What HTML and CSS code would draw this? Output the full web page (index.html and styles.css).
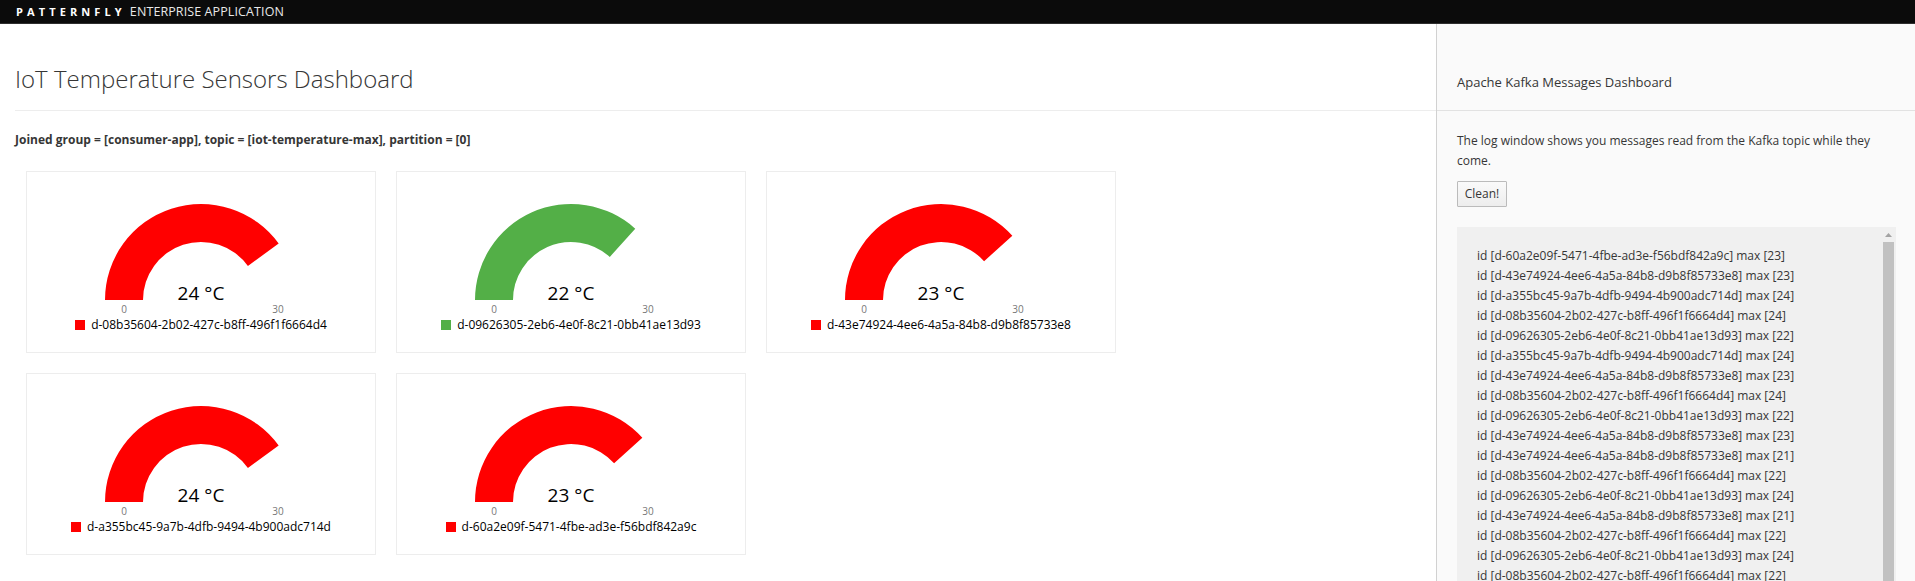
FILE: index.html
```html
<!DOCTYPE html>
<html lang="en">
<head>
<meta charset="utf-8">
<title>IoT Temperature Sensors Dashboard</title>
<link rel="stylesheet" href="styles.css">
</head>
<body>
<nav class="navbar"><span class="brand-logo">PATTERNFLY</span> <span class="brand-name">ENTERPRISE APPLICATION</span></nav>
<div class="layout">
  <main class="main">
    <div class="page-header"><h1>IoT Temperature Sensors Dashboard</h1></div>
    <p class="status">Joined group = [consumer-app], topic = [iot-temperature-max], partition = [0]</p>
    <div class="gauges">
      <div class="card">
        <svg class="gauge" width="348" height="146" viewBox="0 0 348 146">
          <path class="arc-red" d="M78,128 A96,96 0 0 1 251.67,71.57 L220.92,93.91 A58,58 0 0 0 116,128 Z"/>
          <text class="g-value" x="174" y="127.5">24 °C</text>
          <text class="g-minmax" x="97" y="141">0</text>
          <text class="g-minmax" x="251" y="141">30</text>
        </svg>
        <div class="legend"><span class="swatch red"></span><span class="legend-text">d-08b35604-2b02-427c-b8ff-496f1f6664d4</span></div>
      </div>
      <div class="card">
        <svg class="gauge" width="348" height="146" viewBox="0 0 348 146">
          <path class="arc-green" d="M78,128 A96,96 0 0 1 238.24,56.66 L212.81,84.90 A58,58 0 0 0 116,128 Z"/>
          <text class="g-value" x="174" y="127.5">22 °C</text>
          <text class="g-minmax" x="97" y="141">0</text>
          <text class="g-minmax" x="251" y="141">30</text>
        </svg>
        <div class="legend"><span class="swatch green"></span><span class="legend-text">d-09626305-2eb6-4e0f-8c21-0bb41ae13d93</span></div>
      </div>
      <div class="card">
        <svg class="gauge" width="348" height="146" viewBox="0 0 348 146">
          <path class="arc-red" d="M78,128 A96,96 0 0 1 245.34,63.76 L217.10,89.19 A58,58 0 0 0 116,128 Z"/>
          <text class="g-value" x="174" y="127.5">23 °C</text>
          <text class="g-minmax" x="97" y="141">0</text>
          <text class="g-minmax" x="251" y="141">30</text>
        </svg>
        <div class="legend"><span class="swatch red"></span><span class="legend-text">d-43e74924-4ee6-4a5a-84b8-d9b8f85733e8</span></div>
      </div>
      <div class="card">
        <svg class="gauge" width="348" height="146" viewBox="0 0 348 146">
          <path class="arc-red" d="M78,128 A96,96 0 0 1 251.67,71.57 L220.92,93.91 A58,58 0 0 0 116,128 Z"/>
          <text class="g-value" x="174" y="127.5">24 °C</text>
          <text class="g-minmax" x="97" y="141">0</text>
          <text class="g-minmax" x="251" y="141">30</text>
        </svg>
        <div class="legend"><span class="swatch red"></span><span class="legend-text">d-a355bc45-9a7b-4dfb-9494-4b900adc714d</span></div>
      </div>
      <div class="card">
        <svg class="gauge" width="348" height="146" viewBox="0 0 348 146">
          <path class="arc-red" d="M78,128 A96,96 0 0 1 245.34,63.76 L217.10,89.19 A58,58 0 0 0 116,128 Z"/>
          <text class="g-value" x="174" y="127.5">23 °C</text>
          <text class="g-minmax" x="97" y="141">0</text>
          <text class="g-minmax" x="251" y="141">30</text>
        </svg>
        <div class="legend"><span class="swatch red"></span><span class="legend-text">d-60a2e09f-5471-4fbe-ad3e-f56bdf842a9c</span></div>
      </div>
    </div>
  </main>
  <aside class="sidebar">
    <div class="sidebar-header"><h2>Apache Kafka Messages Dashboard</h2></div>
    <div class="sidebar-body">
      <p class="intro">The log window shows you messages read from the Kafka topic while they come.</p>
      <button class="btn" type="button">Clean!</button>
      <div class="log">
        <div class="log-lines">
          <div>id [d-60a2e09f-5471-4fbe-ad3e-f56bdf842a9c] max [23]</div>
          <div>id [d-43e74924-4ee6-4a5a-84b8-d9b8f85733e8] max [23]</div>
          <div>id [d-a355bc45-9a7b-4dfb-9494-4b900adc714d] max [24]</div>
          <div>id [d-08b35604-2b02-427c-b8ff-496f1f6664d4] max [24]</div>
          <div>id [d-09626305-2eb6-4e0f-8c21-0bb41ae13d93] max [22]</div>
          <div>id [d-a355bc45-9a7b-4dfb-9494-4b900adc714d] max [24]</div>
          <div>id [d-43e74924-4ee6-4a5a-84b8-d9b8f85733e8] max [23]</div>
          <div>id [d-08b35604-2b02-427c-b8ff-496f1f6664d4] max [24]</div>
          <div>id [d-09626305-2eb6-4e0f-8c21-0bb41ae13d93] max [22]</div>
          <div>id [d-43e74924-4ee6-4a5a-84b8-d9b8f85733e8] max [23]</div>
          <div>id [d-43e74924-4ee6-4a5a-84b8-d9b8f85733e8] max [21]</div>
          <div>id [d-08b35604-2b02-427c-b8ff-496f1f6664d4] max [22]</div>
          <div>id [d-09626305-2eb6-4e0f-8c21-0bb41ae13d93] max [24]</div>
          <div>id [d-43e74924-4ee6-4a5a-84b8-d9b8f85733e8] max [21]</div>
          <div>id [d-08b35604-2b02-427c-b8ff-496f1f6664d4] max [22]</div>
          <div>id [d-09626305-2eb6-4e0f-8c21-0bb41ae13d93] max [24]</div>
          <div>id [d-08b35604-2b02-427c-b8ff-496f1f6664d4] max [22]</div>
        </div>
        <div class="scrollbar">
          <span class="scroll-arrow"><svg width="7" height="4" viewBox="0 0 7 4"><path d="M0 4 L3.5 0 L7 4 Z"/></svg></span>
          <span class="scroll-thumb"></span>
        </div>
      </div>
    </div>
  </aside>
</div>
</body>
</html>
```

FILE: styles.css
```css
* { box-sizing: border-box; }

html, body {
  margin: 0;
  height: 581px;
  overflow: hidden;
}

body {
  font-family: "Open Sans", "Liberation Sans", sans-serif;
  font-size: 12px;
  line-height: 20px;
  color: #363636;
  background: #fff;
}

.navbar {
  height: 24px;
  background: #0b0b0b;
  border-bottom: 1px solid #2e2e2e;
  padding-left: 16px;
  line-height: 23px;
  color: #f2f2f2;
  white-space: nowrap;
}

.brand-logo {
  font-size: 11px;
  font-weight: 700;
  letter-spacing: 4.1px;
  margin-right: 1px;
  color: #fff;
}

.brand-name {
  font-size: 12.5px;
  font-weight: 400;
  letter-spacing: 0.1px;
  color: #e8e8e8;
}

.layout {
  display: flex;
  height: 557px;
}

.main {
  width: 1436px;
  flex: none;
  padding-left: 15px;
}

.page-header {
  margin-top: 42px;
  padding-bottom: 18px;
  border-bottom: 1px solid #ededed;
}

.page-header h1 {
  margin: 0;
  font-size: 24px;
  font-weight: 300;
  line-height: 26px;
  color: #363636;
}

.status {
  margin: 19px 0 21px;
  font-weight: 700;
  font-size: 12px;
  line-height: 20px;
  white-space: nowrap;
}

.gauges {
  margin-left: 11px;
  display: grid;
  grid-template-columns: repeat(3, 350px);
  gap: 20px;
}

.card {
  width: 350px;
  height: 182px;
  border: 1px solid #ededed;
  background: #fff;
  display: flex;
  flex-direction: column;
  align-items: center;
}

.gauge {
  display: block;
  flex: none;
}

.arc-red { fill: #ff0000; }
.arc-green { fill: #53af47; }

.g-value {
  font-family: "Open Sans", "Liberation Sans", sans-serif;
  font-size: 19px;
  fill: #000;
  text-anchor: middle;
}

.g-minmax {
  font-family: "Open Sans", "Liberation Sans", sans-serif;
  font-size: 10px;
  fill: #777;
  text-anchor: middle;
}

.legend {
  display: flex;
  align-items: center;
  gap: 6px;
  height: 14px;
  line-height: 14px;
  font-size: 12px;
  color: #000;
  white-space: nowrap;
}

.swatch {
  width: 10px;
  height: 10px;
  flex: none;
}
.swatch.red { background: #ff0000; }
.swatch.green { background: #53af47; }

.sidebar {
  flex: 1;
  background: #fafafa;
  border-left: 1px solid #d1d1d1;
  display: flex;
  flex-direction: column;
  min-width: 0;
}

.sidebar-header {
  padding: 48px 20px 18px;
  border-bottom: 1px solid #e2e2e2;
}

.sidebar-header h2 {
  margin: 0;
  font-size: 13px;
  font-weight: 400;
  line-height: 20px;
  color: #363636;
}

.sidebar-body {
  padding: 0 19px 0 20px;
}

.intro {
  margin: 20px 0 10px;
}

.btn {
  display: block;
  width: 50px;
  height: 26px;
  padding: 0;
  border: 1px solid #bbb;
  border-radius: 1px;
  background: linear-gradient(to bottom, #fafafa 0%, #ededed 100%);
  font-family: "Open Sans", "Liberation Sans", sans-serif;
  font-size: 12px;
  color: #363636;
  line-height: 24px;
  text-align: center;
}

.log {
  margin-top: 20px;
  height: 400px;
  background: #f0f0f0;
  display: flex;
  overflow: hidden;
}

.log-lines {
  flex: 1;
  padding: 19px 20px;
  white-space: nowrap;
}

.scrollbar {
  width: 15px;
  flex: none;
  display: flex;
  flex-direction: column;
  align-items: center;
}

.scroll-arrow {
  height: 15px;
  display: flex;
  align-items: flex-start;
  justify-content: center;
  padding-top: 6px;
}

.scroll-arrow svg {
  display: block;
  fill: #a3a3a3;
}

.scroll-thumb {
  width: 11px;
  height: 360px;
  background: #c1c1c1;
}
```
